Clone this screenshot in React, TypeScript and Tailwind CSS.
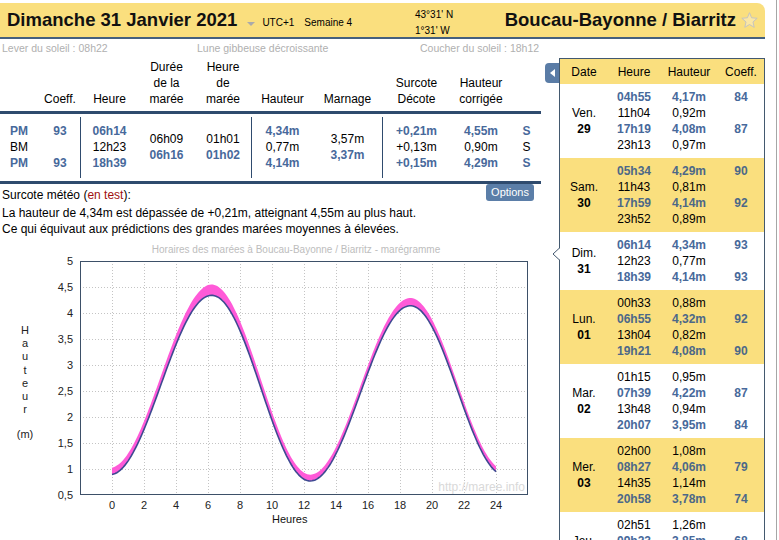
import React from 'react';

const BLUE = 'text-[#47699b]';
const LINE = 'bg-[#2f4b6e]';

type Tide = { h: string; m: string; c?: string };
type Day = { d: string; n: string; tides: Tide[]; yellow: boolean; current?: boolean };

const days: Day[] = [
  {
    d: 'Ven.', n: '29', yellow: false,
    tides: [
      { h: '04h55', m: '4,17m', c: '84' },
      { h: '11h04', m: '0,92m' },
      { h: '17h19', m: '4,08m', c: '87' },
      { h: '23h13', m: '0,97m' },
    ],
  },
  {
    d: 'Sam.', n: '30', yellow: true,
    tides: [
      { h: '05h34', m: '4,29m', c: '90' },
      { h: '11h43', m: '0,81m' },
      { h: '17h59', m: '4,14m', c: '92' },
      { h: '23h52', m: '0,89m' },
    ],
  },
  {
    d: 'Dim.', n: '31', yellow: false, current: true,
    tides: [
      { h: '06h14', m: '4,34m', c: '93' },
      { h: '12h23', m: '0,77m' },
      { h: '18h39', m: '4,14m', c: '93' },
    ],
  },
  {
    d: 'Lun.', n: '01', yellow: true,
    tides: [
      { h: '00h33', m: '0,88m' },
      { h: '06h55', m: '4,32m', c: '92' },
      { h: '13h04', m: '0,82m' },
      { h: '19h21', m: '4,08m', c: '90' },
    ],
  },
  {
    d: 'Mar.', n: '02', yellow: false,
    tides: [
      { h: '01h15', m: '0,95m' },
      { h: '07h39', m: '4,22m', c: '87' },
      { h: '13h48', m: '0,94m' },
      { h: '20h07', m: '3,95m', c: '84' },
    ],
  },
  {
    d: 'Mer.', n: '03', yellow: true,
    tides: [
      { h: '02h00', m: '1,08m' },
      { h: '08h27', m: '4,06m', c: '79' },
      { h: '14h35', m: '1,14m' },
      { h: '20h58', m: '3,78m', c: '74' },
    ],
  },
  {
    d: 'Jeu.', n: '04', yellow: false,
    tides: [
      { h: '02h51', m: '1,26m' },
      { h: '09h23', m: '3,85m', c: '68' },
      { h: '15h39', m: '1,30m' },
      { h: '21h57', m: '3,60m', c: '63' },
    ],
  },
];

// tide curve: cosine interpolation between high / low waters
const extrema: [number, number][] = [
  [-8 / 60, 0.89],
  [6 + 14 / 60, 4.34],
  [12 + 23 / 60, 0.77],
  [18 + 39 / 60, 4.14],
  [24 + 33 / 60, 0.88],
];
const surge: [number, number][] = [
  [-8 / 60, 0.13],
  [6 + 14 / 60, 0.21],
  [12 + 23 / 60, 0.12],
  [18 + 39 / 60, 0.15],
  [24 + 33 / 60, 0.1],
];

function level(t: number) {
  for (let i = 0; i < extrema.length - 1; i++) {
    const [t0, h0] = extrema[i];
    const [t1, h1] = extrema[i + 1];
    if (t >= t0 && t <= t1) {
      const f = (t - t0) / (t1 - t0);
      return h0 + ((h1 - h0) * (1 - Math.cos(Math.PI * f))) / 2;
    }
  }
  return 0;
}
function surgeAt(t: number) {
  for (let i = 0; i < surge.length - 1; i++) {
    const [t0, s0] = surge[i];
    const [t1, s1] = surge[i + 1];
    if (t >= t0 && t <= t1) return s0 + ((s1 - s0) * (t - t0)) / (t1 - t0);
  }
  return 0;
}
const X = (t: number) => 112 + 16 * t;
const Y = (h: number) => 498 - (h - 0.5) * 52;

const Chart = () => {
  const ts: number[] = [];
  for (let t = 0; t <= 24.0001; t += 0.1) ts.push(t);
  const low = ts.map((t) => `${X(t).toFixed(1)},${Y(level(t)).toFixed(1)}`);
  const high = ts.map((t) => `${X(t).toFixed(1)},${Y(level(t) + surgeAt(t)).toFixed(1)}`);
  const band = [...high, ...low.slice().reverse()].join(' ');
  const yLabels = ['5', '4,5', '4', '3,5', '3', '2,5', '2', '1,5', '1', '0,5'];
  const letters = ['H', 'a', 'u', 't', 'e', 'u', 'r'];

  return (
    <svg width={545} height={300} viewBox="0 240 545 300" className="block" fontFamily="'Liberation Sans', Arial, sans-serif">
      <text x={296} y={256} textAnchor="middle" fontSize={10} fill="#bdbdbd">
        Horaires des marées à Boucau-Bayonne / Biarritz - marégramme
      </text>
      {/* grid */}
      {Array.from({ length: 8 }, (_, k) => (
        <line key={'h' + k} x1={80} x2={528} y1={290.5 + 26 * k} y2={290.5 + 26 * k} stroke="#c4c4c4" strokeDasharray="1 2" />
      ))}
      {Array.from({ length: 13 }, (_, k) => (
        <line key={'v' + k} x1={112.5 + 32 * k} x2={112.5 + 32 * k} y1={264} y2={498} stroke="#c4c4c4" strokeDasharray="1 2" />
      ))}
      <text x={525} y={494} textAnchor="end" fontSize={12} fill="#d9d9d9">
        http://maree.info
      </text>
      <polygon points={band} fill="#ff5ad8" />
      <polyline points={low.join(' ')} fill="none" stroke="#3e4a92" strokeWidth={1.6} />
      <rect x={80.5} y={264.5} width={447} height={233} fill="none" stroke="#3d5068" />
      {yLabels.map((l, k) => (
        <text key={l} x={73} y={268 + 26 * k} textAnchor="end" fontSize={11} fill="#222">
          {l}
        </text>
      ))}
      {Array.from({ length: 13 }, (_, k) => (
        <text key={'x' + k} x={112 + 32 * k} y={512} textAnchor="middle" fontSize={11} fill="#222">
          {2 * k}
        </text>
      ))}
      <text x={272} y={526} fontSize={11} fill="#111">
        Heures
      </text>
      {letters.map((c, k) => (
        <text key={k} x={25} y={337 + 13.2 * k} textAnchor="middle" fontSize={11} fill="#222">
          {c}
        </text>
      ))}
      <text x={25} y={441} textAnchor="middle" fontSize={11} fill="#222">
        (m)
      </text>
    </svg>
  );
};

const widths = ['w-[40px]', 'w-[40px]', 'w-px', 'w-[57px]', 'w-[57px]', 'w-[56px]', 'w-px', 'w-[61px]', 'w-[69px]', 'w-px', 'w-[67px]', 'w-[62px]', 'w-[29px]'];

const Sep = () => <div className={`w-px my-[3px] ${LINE}`} />;

const TideTable = () => (
  <div className="text-[12px] leading-4">
    {/* header */}
    <div className="flex items-end pt-[1px] pb-[4px] h-[56px] border-b-[3px] border-[#2f4b6e]">
      <div className={widths[0]} />
      <div className={`${widths[1]} text-center`}>Coeff.</div>
      <div className={widths[2]} />
      <div className={`${widths[3]} text-center`}>Heure</div>
      <div className={`${widths[4]} text-center`}>Durée<br />de la<br />marée</div>
      <div className={`${widths[5]} text-center`}>Heure<br />de<br />marée</div>
      <div className={widths[6]} />
      <div className={`${widths[7]} text-center`}>Hauteur</div>
      <div className={`${widths[8]} text-center`}>Marnage</div>
      <div className={widths[9]} />
      <div className={`${widths[10]} text-center`}>Surcote<br />Décote</div>
      <div className={`${widths[11]} text-center`}>Hauteur<br />corrigée</div>
      <div className={widths[12]} />
    </div>
    {/* body */}
    <div className="flex h-[70px] border-b-[3px] border-[#2f4b6e]">
      <div className={`${widths[0]} pl-[10px] pt-[9px]`}>
        <div className={`font-bold ${BLUE}`}>PM</div>
        <div>BM</div>
        <div className={`font-bold ${BLUE}`}>PM</div>
      </div>
      <div className={`${widths[1]} pt-[9px] text-center font-bold ${BLUE}`}>
        <div>93</div>
        <div>&nbsp;</div>
        <div>93</div>
      </div>
      <Sep />
      <div className={`${widths[3]} pt-[9px] text-center`}>
        <div className={`font-bold ${BLUE}`}>06h14</div>
        <div>12h23</div>
        <div className={`font-bold ${BLUE}`}>18h39</div>
      </div>
      <div className={`${widths[4]} pt-[9px] text-center`}>
        <div className="h-[48px] flex flex-col justify-center">
          <div>06h09</div>
          <div className={`font-bold ${BLUE}`}>06h16</div>
        </div>
      </div>
      <div className={`${widths[5]} pt-[9px] text-center`}>
        <div className="h-[48px] flex flex-col justify-center">
          <div>01h01</div>
          <div className={`font-bold ${BLUE}`}>01h02</div>
        </div>
      </div>
      <Sep />
      <div className={`${widths[7]} pt-[9px] text-center`}>
        <div className={`font-bold ${BLUE}`}>4,34m</div>
        <div>0,77m</div>
        <div className={`font-bold ${BLUE}`}>4,14m</div>
      </div>
      <div className={`${widths[8]} pt-[9px] text-center`}>
        <div className="h-[48px] flex flex-col justify-center">
          <div>3,57m</div>
          <div className={`font-bold ${BLUE}`}>3,37m</div>
        </div>
      </div>
      <Sep />
      <div className={`${widths[10]} pt-[9px] text-center`}>
        <div className={`font-bold ${BLUE}`}>+0,21m</div>
        <div>+0,13m</div>
        <div className={`font-bold ${BLUE}`}>+0,15m</div>
      </div>
      <div className={`${widths[11]} pt-[9px] text-center`}>
        <div className={`font-bold ${BLUE}`}>4,55m</div>
        <div>0,90m</div>
        <div className={`font-bold ${BLUE}`}>4,29m</div>
      </div>
      <div className={`${widths[12]} pt-[9px] text-center`}>
        <div className={`font-bold ${BLUE}`}>S</div>
        <div>S</div>
        <div className={`font-bold ${BLUE}`}>S</div>
      </div>
    </div>
  </div>
);

const SidePanel = () => (
  <div className="flex">
    {/* collapse tab */}
    <div className="w-[14px] h-[20px] mt-[5px] bg-[#5a7ca6] rounded-l-[4px] flex items-center justify-center">
      <svg width="5" height="8" viewBox="0 0 5 8">
        <polygon points="5,0 0,4 5,8" fill="#fff" />
      </svg>
    </div>
    <div className="w-[206px] border-x border-t border-[#43596f] text-[12px] leading-4">
      <div className="h-[25px] bg-[#fadf7e] flex items-center text-center">
        <div className="w-[48px]">Date</div>
        <div className="w-[52px]">Heure</div>
        <div className="w-[58px]">Hauteur</div>
        <div className="w-[46px]">Coeff.</div>
      </div>
      {days.map((day) => (
        <div key={day.n} className={`relative flex py-[5px] ${day.yellow ? 'bg-[#fadf7e]' : 'bg-white'}`}>
          {day.current && (
            <svg width="8" height="12" viewBox="0 0 8 12" className="absolute left-[-8px] top-[16px]">
              <polygon points="8,0 1.5,6 8,12" fill="#fff" />
              <polyline points="7.5,0 1,6 7.5,12" fill="none" stroke="#43596f" />
            </svg>
          )}
          <div className="w-[48px] flex flex-col justify-center items-center">
            <div>{day.d}</div>
            <div className="font-bold">{day.n}</div>
          </div>
          <div className="flex flex-col">
            {day.tides.map((t) => (
              <div key={t.h} className={`flex text-center ${t.c ? `font-bold ${day.yellow ? 'text-[#4c6888]' : BLUE}` : ''}`}>
                <div className="w-[52px]">{t.h}</div>
                <div className="w-[58px]">{t.m}</div>
                <div className="w-[46px]">{t.c ?? ''}</div>
              </div>
            ))}
          </div>
        </div>
      ))}
    </div>
  </div>
);

export default function App() {
  return (
    <div className="w-[779px] h-[540px] overflow-hidden bg-white font-['Liberation_Sans',Arial,sans-serif] text-black">
      <div className="w-[777px] h-full border-r border-[#a6a6a6]">
        {/* title bar */}
        <div className="pt-[3px]">
          <div className="w-[765px] h-[36px] bg-[#fadf7e] rounded-tr-[8px] border-b-2 border-[#44607e] flex items-center">
            <div className="w-[415px] flex items-baseline pl-[7px]">
              <span className="text-[18.5px] font-bold text-[#111]">Dimanche 31 Janvier 2021</span>
              <span className="ml-[10px] mb-[5px] w-0 h-0 border-x-[4px] border-x-transparent border-t-[4px] border-t-[#aaa]" />
              <span className="ml-[7px] text-[10px]">UTC+1</span>
              <span className="ml-[10px] text-[10px]">Semaine 4</span>
            </div>
            <div className="self-start pt-[4px] text-[10px] leading-4">
              <div>43°31' N</div>
              <div>1°31' W</div>
            </div>
            <div className="flex-1 flex justify-end items-center pr-[7px]">
              <span className="text-[18.5px] font-bold text-[#111]">Boucau-Bayonne / Biarritz</span>
              <svg width="17" height="16" viewBox="0 0 24 23" className="ml-[5px]">
                <polygon
                  points="12,1 15,8.3 23,9 17,14.3 18.8,22 12,18 5.2,22 7,14.3 1,9 9,8.3"
                  fill="#fbe7a4"
                  stroke="#c2c2c2"
                  strokeWidth="1.4"
                  strokeLinejoin="round"
                />
              </svg>
            </div>
          </div>
        </div>
        {/* sun / moon */}
        <div className="h-[19px] flex pt-[3px] text-[10.5px] leading-[12px] text-[#b0b0b0]">
          <div className="w-[197px] pl-[2px]">Lever du soleil : 08h22</div>
          <div className="w-[223px]">Lune gibbeuse décroissante</div>
          <div>Coucher du soleil : 18h12</div>
        </div>
        <div className="flex">
          <div className="w-[541px]">
            <TideTable />
            <div className="flex justify-between pr-[7px]">
              <div className="pt-[3px] pl-[2px] text-[12px] leading-4">
                <div className="h-[18px]">
                  Surcote météo (<span className="text-[#a01010]">en test</span>):
                </div>
                <div>La hauteur de 4,34m est dépassée de +0,21m, atteignant 4,55m au plus haut.</div>
                <div>Ce qui équivaut aux prédictions des grandes marées moyennes à élevées.</div>
              </div>
              <div className="h-[17px] px-[5px] bg-[#5b7ea8] rounded-[3px] text-white text-[11px] leading-[17px]">Options</div>
            </div>
            <Chart />
          </div>
          <div className="ml-[4px]">
            <SidePanel />
          </div>
        </div>
      </div>
    </div>
  );
}
